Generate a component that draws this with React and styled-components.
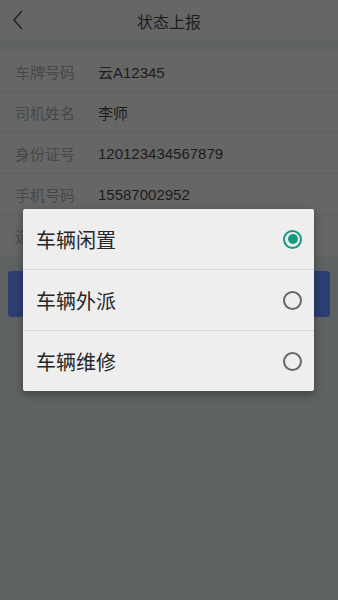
import React, { useState } from 'react';
import styled, { createGlobalStyle } from 'styled-components';

const GlobalStyle = createGlobalStyle`
    html, body {
        margin : 0;
        padding : 0;
        background : #5e6260;
        font-family : "Noto Sans CJK SC", "Liberation Sans", sans-serif;
    }
`

const fields = [
    { label : '车牌号码', value : '云A12345' },
    { label : '司机姓名', value : '李师' },
    { label : '身份证号', value : '120123434567879' },
    { label : '手机号码', value : '15587002952' },
    { label : '选择状态', value : '' },
];

const options = ['车辆闲置', '车辆外派', '车辆维修'];

const App = () => {
    const [picked, setPicked] = useState(0)
    return (
        <Page>
            <GlobalStyle />
            <Header>
                <Back>
                    <svg width="12" height="20" viewBox="0 0 12 20">
                        <path d="M10 1 L2 10 L10 19" fill="none" stroke="#1e1e1e" strokeWidth="1.3" />
                    </svg>
                </Back>
                <Title>状态上报</Title>
            </Header>
            <Form>
                {fields.map((f) => (
                    <Row key={f.label}>
                        <Label>{f.label}</Label>
                        <Value>{f.value}</Value>
                    </Row>
                ))}
            </Form>
            <Submit>提交</Submit>

            {/* 상태 선택 다이얼로그 */}
            <Overlay>
                <Dialog>
                    {options.map((o, i) => (
                        <Option key={o} onClick={() => setPicked(i)}>
                            <OptionText>{o}</OptionText>
                            <Radio $on={picked === i} />
                        </Option>
                    ))}
                </Dialog>
            </Overlay>
        </Page>
    );
};

const Page = styled.div`
    position : relative;
    width : 338px;
    height : 600px;
    background : #5e6260;
    overflow : hidden;
`
const Header = styled.div`
    position : relative;
    height : 41px;
    background : #666666;
    display : flex;
    align-items : center;
    justify-content : center;
`
const Back = styled.div`
    position : absolute;
    left : 12px;
    top : 10px;
    line-height : 0;
`
const Title = styled.span`
    font-size : 16px;
    color : #1e1e1e;
`
const Form = styled.div`
    margin-top : 10px;
    background : #666666;
`
const Row = styled.div`
    display : flex;
    align-items : center;
    height : 41px;
    box-sizing : border-box;
    padding-left : 15px;
    border-bottom : 1px solid #5e5e5e;
    &:last-child {
        border-bottom : none;
    }
`
const Label = styled.span`
    width : 83px;
    font-size : 15px;
    color : #474747;
`
const Value = styled.span`
    font-size : 15px;
    color : #1c1c1c;
    font-family : "Liberation Sans", "Noto Sans CJK SC", sans-serif;
`
const Submit = styled.div`
    margin : 15px 8px 0;
    height : 46px;
    border-radius : 3px;
    background : #2d3e72;
    color : #5e6b8e;
    font-size : 16px;
    display : flex;
    align-items : center;
    justify-content : center;
`
const Overlay = styled.div`
    position : absolute;
    inset : 0;
`
const Dialog = styled.div`
    position : absolute;
    left : 23px;
    top : 209px;
    width : 291px;
    background : #eeeeee;
    border-radius : 2px;
    box-shadow : 0 3px 10px rgba(0,0,0,0.35);
`
const Option = styled.div`
    display : flex;
    align-items : center;
    justify-content : space-between;
    height : 61px;
    box-sizing : border-box;
    padding : 0 12px 0 13px;
    border-bottom : 1px solid #d4d4d4;
    &:last-child {
        border-bottom : none;
        height : 60px;
    }
`
const OptionText = styled.span`
    font-size : 20px;
    color : #262626;
`
const Radio = styled.span`
    width : 15px;
    height : 15px;
    border-radius : 50%;
    border : 2px solid ${p => p.$on ? '#139a80' : '#676767'};
    display : flex;
    align-items : center;
    justify-content : center;
    &::after {
        content : '';
        width : 10px;
        height : 10px;
        border-radius : 50%;
        background : ${p => p.$on ? '#139a80' : 'transparent'};
    }
`

export default App;
